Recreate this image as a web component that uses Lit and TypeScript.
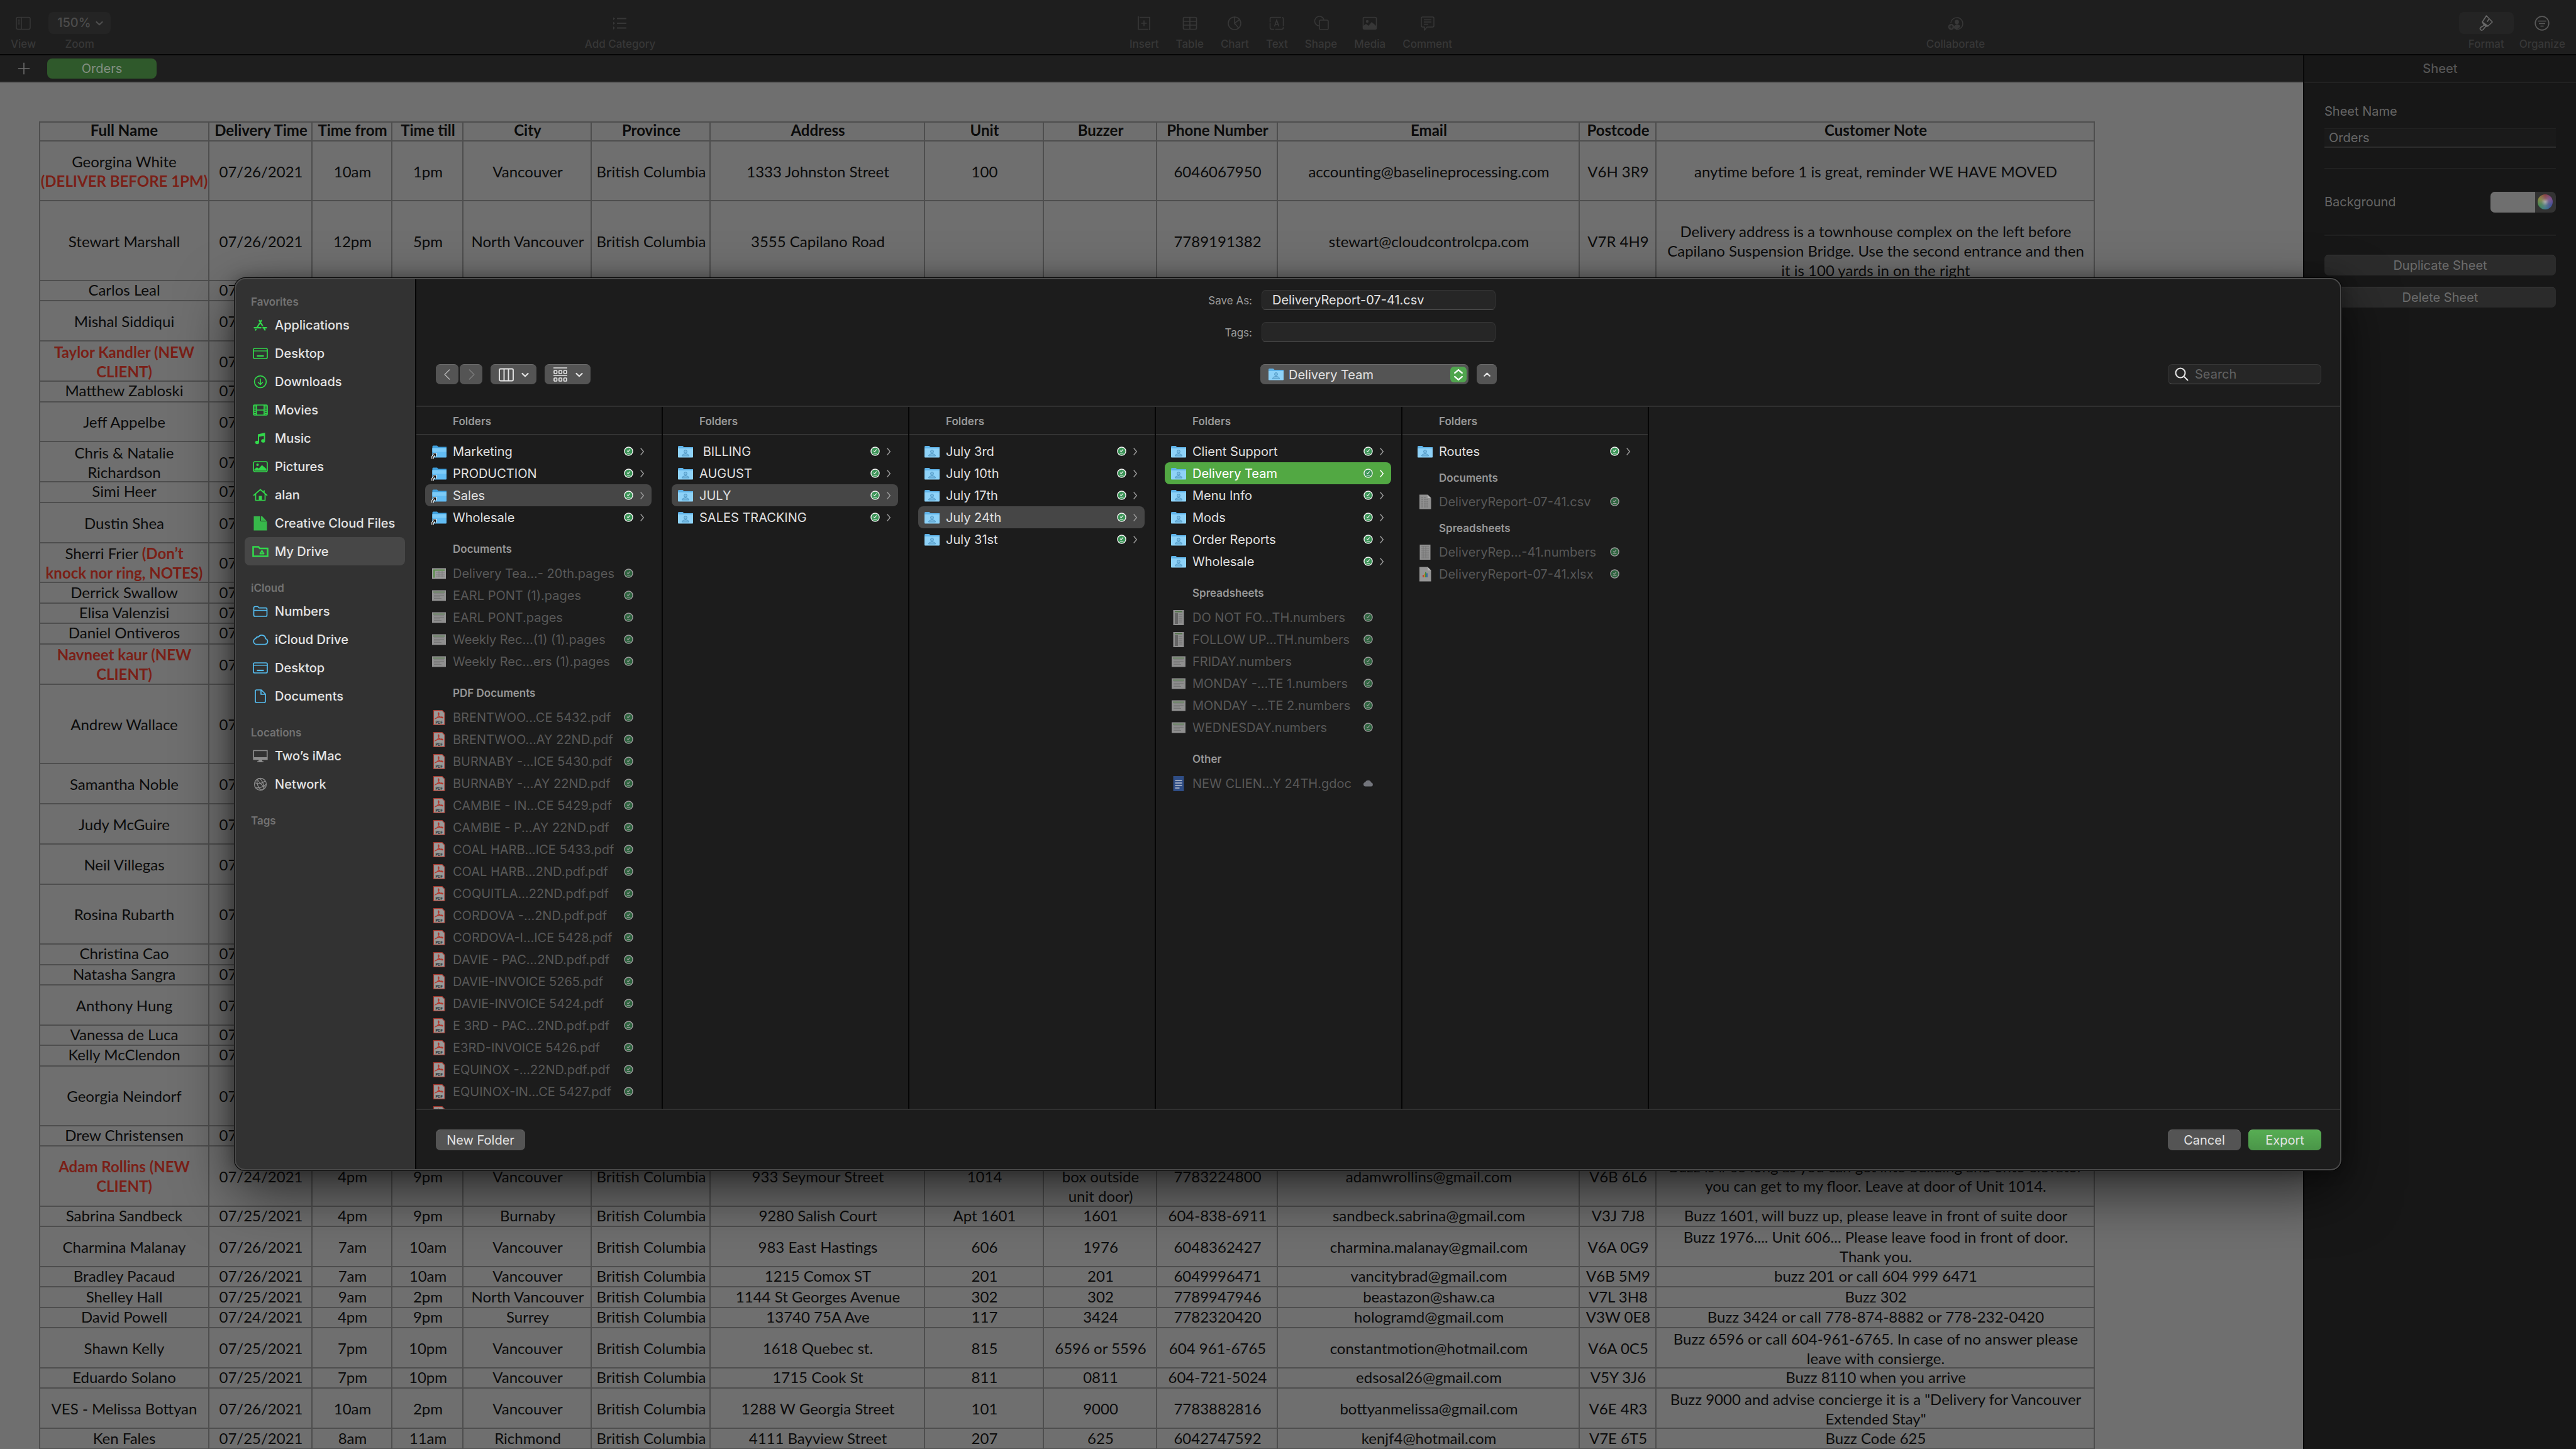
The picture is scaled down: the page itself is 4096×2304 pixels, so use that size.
import { LitElement, html, css, svg, TemplateResult } from "lit";
import { customElement, property } from "lit/decorators.js";
import { classMap } from "lit/directives/class-map.js";

/* ---------- data ---------- */

type Cell = string | TemplateResult;
interface Order {
  lines: 1 | 2 | 3 | 4;
  name: Cell;
  date: string;
  rest?: Cell[];
}

const red = (text: Cell) => html`<b class="alert">${text}</b>`;

const COLUMNS = [
  "Full Name", "Delivery Time", "Time from", "Time till", "City", "Province", "Address",
  "Unit", "Buzzer", "Phone Number", "Email", "Postcode", "Customer Note",
];

const BC = "British Columbia";

const ORDERS: Order[] = [
  { lines: 3, name: html`Georgina White<br />${red("(DELIVER BEFORE 1PM)")}`, date: "07/26/2021",
    rest: ["10am", "1pm", "Vancouver", BC, "1333 Johnston Street", "100", "", "6046067950", "accounting@baselineprocessing.com", "V6H 3R9", "anytime before 1 is great, reminder WE HAVE MOVED"] },
  { lines: 4, name: "Stewart Marshall", date: "07/26/2021",
    rest: ["12pm", "5pm", "North Vancouver", BC, "3555 Capilano Road", "", "", "7789191382", "stewart@cloudcontrolcpa.com", "V7R 4H9",
      html`<br />Delivery address is a townhouse complex on the left before<br />Capilano Suspension Bridge. Use the second entrance and then<br />it is 100 yards in on the right`] },
  { lines: 1, name: "Carlos Leal", date: "07/26/2021" },
  { lines: 2, name: "Mishal Siddiqui", date: "07/26/2021" },
  { lines: 2, name: red(html`Taylor Kandler (NEW<br />CLIENT)`), date: "07/26/2021" },
  { lines: 1, name: "Matthew Zabloski", date: "07/26/2021" },
  { lines: 2, name: "Jeff Appelbe", date: "07/26/2021" },
  { lines: 2, name: html`Chris &amp; Natalie<br />Richardson`, date: "07/26/2021" },
  { lines: 1, name: "Simi Heer", date: "07/26/2021" },
  { lines: 2, name: "Dustin Shea", date: "07/26/2021" },
  { lines: 2, name: html`Sherri Frier ${red(html`(Don’t<br />knock nor ring, NOTES)`)}`, date: "07/26/2021" },
  { lines: 1, name: "Derrick Swallow", date: "07/26/2021" },
  { lines: 1, name: "Elisa Valenzisi", date: "07/26/2021" },
  { lines: 1, name: "Daniel Ontiveros", date: "07/26/2021" },
  { lines: 2, name: red(html`Navneet kaur (NEW<br />CLIENT)`), date: "07/26/2021" },
  { lines: 4, name: "Andrew Wallace", date: "07/26/2021" },
  { lines: 2, name: "Samantha Noble", date: "07/26/2021" },
  { lines: 2, name: "Judy McGuire", date: "07/26/2021" },
  { lines: 2, name: "Neil Villegas", date: "07/26/2021" },
  { lines: 3, name: "Rosina Rubarth", date: "07/26/2021" },
  { lines: 1, name: "Christina Cao", date: "07/26/2021" },
  { lines: 1, name: "Natasha Sangra", date: "07/26/2021" },
  { lines: 2, name: "Anthony Hung", date: "07/26/2021" },
  { lines: 1, name: "Vanessa de Luca", date: "07/26/2021" },
  { lines: 1, name: "Kelly McClendon", date: "07/26/2021" },
  { lines: 3, name: "Georgia Neindorf", date: "07/26/2021" },
  { lines: 1, name: "Drew Christensen", date: "07/26/2021" },
  { lines: 3, name: red(html`Adam Rollins (NEW<br />CLIENT)`), date: "07/24/2021",
    rest: ["4pm", "9pm", "Vancouver", BC, "933 Seymour Street", "1014", html`(lock<br />box outside<br />unit door)`, "7783224800", "adamwrollins@gmail.com", "V6B 6L6",
      html`Buzz is # so long as you can get into building and onto elevator<br />you can get to my floor. Leave at door of Unit 1014.`] },
  { lines: 1, name: "Sabrina Sandbeck", date: "07/25/2021",
    rest: ["4pm", "9pm", "Burnaby", BC, "9280 Salish Court", "Apt 1601", "1601", "604-838-6911", "sandbeck.sabrina@gmail.com", "V3J 7J8", "Buzz 1601, will buzz up, please leave in front of suite door"] },
  { lines: 2, name: "Charmina Malanay", date: "07/26/2021",
    rest: ["7am", "10am", "Vancouver", BC, "983 East Hastings", "606", "1976", "6048362427", "charmina.malanay@gmail.com", "V6A 0G9", html`Buzz 1976.... Unit 606... Please leave food in front of door.<br />Thank you.`] },
  { lines: 1, name: "Bradley Pacaud", date: "07/26/2021",
    rest: ["7am", "10am", "Vancouver", BC, "1215 Comox ST", "201", "201", "6049996471", "vancitybrad@gmail.com", "V6B 5M9", "buzz 201 or call 604 999 6471"] },
  { lines: 1, name: "Shelley Hall", date: "07/25/2021",
    rest: ["9am", "2pm", "North Vancouver", BC, "1144 St Georges Avenue", "302", "302", "7789947946", "beastazon@shaw.ca", "V7L 3H8", "Buzz 302"] },
  { lines: 1, name: "David Powell", date: "07/24/2021",
    rest: ["4pm", "9pm", "Surrey", BC, "13740 75A Ave", "117", "3424", "7782320420", "hologramd@gmail.com", "V3W 0E8", "Buzz 3424 or call 778-874-8882 or 778-232-0420"] },
  { lines: 2, name: "Shawn Kelly", date: "07/25/2021",
    rest: ["7pm", "10pm", "Vancouver", BC, "1618 Quebec st.", "815", "6596 or 5596", "604 961-6765", "constantmotion@hotmail.com", "V6A 0C5", html`Buzz 6596 or call 604-961-6765. In case of no answer please<br />leave with consierge.`] },
  { lines: 1, name: "Eduardo Solano", date: "07/25/2021",
    rest: ["7pm", "10pm", "Vancouver", BC, "1715 Cook St", "811", "0811", "604-721-5024", "edsosal26@gmail.com", "V5Y 3J6", "Buzz 8110 when you arrive"] },
  { lines: 2, name: "VES - Melissa Bottyan", date: "07/26/2021",
    rest: ["10am", "2pm", "Vancouver", BC, "1288 W Georgia Street", "101", "9000", "7783882816", "bottyanmelissa@gmail.com", "V6E 4R3", html`Buzz 9000 and advise concierge it is a "Delivery for Vancouver<br />Extended Stay"`] },
  { lines: 1, name: "Ken Fales", date: "07/25/2021",
    rest: ["8am", "11am", "Richmond", BC, "4111 Bayview Street", "207", "625", "6042747592", "kenjf4@hotmail.com", "V7E 6T5", "Buzz Code 625"] },
];

interface Entry { name: string; icon: string; cloud?: boolean }
interface Section { title: string; items: Entry[]; dim?: boolean }
interface Pane { sections: Section[]; selected?: string; active?: boolean; compact?: boolean }

const entries = (icon: string, ...names: string[]): Entry[] => names.map((name) => ({ name, icon }));

const PANES: Pane[] = [
  { selected: "Sales", sections: [
    { title: "Folders", items: entries("alias", "Marketing", "PRODUCTION", "Sales", "Wholesale") },
    { title: "Documents", dim: true, items: [
      ...entries("pageside", "Delivery Tea...- 20th.pages"),
      ...entries("page", "EARL PONT (1).pages", "EARL PONT.pages", "Weekly Rec...(1) (1).pages", "Weekly Rec...ers (1).pages"),
    ] },
    { title: "PDF Documents", dim: true, items: [
      ...entries("pdf",
        "BRENTWOO...CE 5432.pdf", "BRENTWOO...AY 22ND.pdf", "BURNABY -...ICE 5430.pdf", "BURNABY -...AY 22ND.pdf",
        "CAMBIE - IN...CE 5429.pdf", "CAMBIE - P...AY 22ND.pdf", "COAL HARB...ICE 5433.pdf", "COAL HARB...2ND.pdf.pdf",
        "COQUITLA...22ND.pdf.pdf", "CORDOVA -...2ND.pdf.pdf", "CORDOVA-I...ICE 5428.pdf", "DAVIE - PAC...2ND.pdf.pdf",
        "DAVIE-INVOICE 5265.pdf", "DAVIE-INVOICE 5424.pdf", "E 3RD - PAC...2ND.pdf.pdf", "E3RD-INVOICE 5426.pdf",
        "EQUINOX -...22ND.pdf.pdf", "EQUINOX-IN...CE 5427.pdf"),
      ...entries("pdfsheet", ""),
    ] },
  ] },
  { selected: "JULY", sections: [{ title: "Folders", items: entries("folder", "\u00a0BILLING", "AUGUST", "JULY", "SALES TRACKING") }] },
  { selected: "July 24th", sections: [{ title: "Folders", items: entries("folder", "July 3rd", "July 10th", "July 17th", "July 24th", "July 31st") }] },
  { selected: "Delivery Team", active: true, sections: [
    { title: "Folders", items: entries("folder", "Client Support", "Delivery Team", "Menu Info", "Mods", "Order Reports", "Wholesale") },
    { title: "Spreadsheets", dim: true, items: [
      ...entries("tall", "DO NOT FO...TH.numbers", "FOLLOW UP...TH.numbers"),
      ...entries("page", "FRIDAY.numbers", "MONDAY -...TE 1.numbers", "MONDAY -...TE 2.numbers", "WEDNESDAY.numbers"),
    ] },
    { title: "Other", dim: true, items: [{ name: "NEW CLIEN...Y 24TH.gdoc", icon: "gdoc", cloud: true }] },
  ] },
  { compact: true, sections: [
    { title: "Folders", items: entries("folder", "Routes") },
    { title: "Documents", dim: true, items: entries("csv", "DeliveryReport-07-41.csv") },
    { title: "Spreadsheets", dim: true, items: [
      ...entries("grid", "DeliveryRep...-41.numbers"), ...entries("xlsx", "DeliveryReport-07-41.xlsx")] },
  ] },
];

const SIDEBAR = [
  { title: "Favorites", tint: "green", items: [
    ["apps", "Applications"], ["desktop", "Desktop"], ["downloads", "Downloads"], ["movies", "Movies"], ["music", "Music"],
    ["pictures", "Pictures"], ["home", "alan"], ["file", "Creative Cloud Files"], ["drive", "My Drive"]] },
  { title: "iCloud", tint: "blue", items: [["folderline", "Numbers"], ["cloud", "iCloud Drive"], ["desktop", "Desktop"], ["doc", "Documents"]] },
  { title: "Locations", tint: "gray", items: [["imac", "Two’s iMac"], ["globe", "Network"]] },
  { title: "Tags", tint: "gray", items: [] },
];

/* ---------- icons, all on a 24 unit square ---------- */

const sheetLines = svg`<path d="M4 9h16M4 11.5h16M4 14h10M4 16.5h12" stroke="#777" stroke-width="1"/>`;
const pdfSheet = svg`<path fill="#9b9a99" stroke="#a8382e" stroke-width="1.200" d="M3.500.6h13.500l4 4v18.800H3.500z"/><path fill="none" stroke="#b3372c" stroke-width="1.300" d="M6.500 13.500c3-.5 6-5 5.500-8.500-.8-2-2 0-1 2 1.200 3 4 5.500 6.800 5.500 1.200-.8-.5-1.800-3-1.500-3.500.3-7 1.300-8.300 2.500z"/>`;

const ICONS: Record<string, TemplateResult> = {
  apps: svg`<g fill="none" stroke="currentColor" stroke-width="2.2" stroke-linecap="round"><path d="M13.6 4.6 6.600 16M10.400 4.600l4.800 8M2.400 16.200h10.400M16.200 16.200h5.400M4.400 19.600l.5-.8M17 15.600l2.400 4"/></g>`,
  desktop: svg`<g fill="none" stroke="currentColor" stroke-width="1.700"><rect x="1" y="4" width="22" height="16" rx="2"/><path d="M1 8h22" stroke-width="1.300"/><path d="M6.500 16h11" stroke-width="2.200"/></g>`,
  downloads: svg`<g fill="none" stroke="currentColor" stroke-width="1.700" stroke-linecap="round" stroke-linejoin="round"><circle cx="12" cy="12" r="9.400"/><path d="M12 7.500v9M8.500 13l3.500 3.500 3.500-3.500"/></g>`,
  movies: svg`<g fill="none" stroke="currentColor" stroke-width="1.700"><rect x="1" y="4" width="22" height="16" rx="1.500"/><path d="M6 4v16M18 4v16M6 12h12"/><path d="M3.500 5v14M20.500 5v14" stroke-dasharray="1.500 1.500" stroke-width="3"/></g>`,
  music: svg`<path fill="currentColor" d="M8 5.500 19.500 3v13.200a3.200 2.700 0 1 1-2-2.600V8L10 9.600v9a3.200 2.700 0 1 1-2-2.600z"/>`,
  pictures: svg`<rect x="1" y="4" width="22" height="16" rx="2.500" fill="none" stroke="currentColor" stroke-width="1.700"/><circle cx="7.500" cy="9" r="2" fill="currentColor"/><path fill="currentColor" d="M2.500 18.500v-2.500l4-3 3 2 5-5.500 7 6v3z"/>`,
  home: svg`<g fill="none" stroke="currentColor" stroke-width="1.700" stroke-linejoin="round" stroke-linecap="round"><path d="M1.500 12.500 12 3.500l10.500 9M4.500 11v9.500h15V11M18 5v3"/></g><path fill="currentColor" d="M9.500 13.500h5v7h-5z"/>`,
  file: svg`<path fill="#37b84a" d="M1.500 1h13.500l7.500 8v14.500h-21z"/><path fill="none" stroke="#2b2f2c" d="M12.500 1v7.500h9.500"/>`,
  drive: svg`<path fill="none" stroke="currentColor" stroke-width="2.600" d="M0.500 5.500v14h23V7H11L9 4.500H.5z"/><path fill="none" stroke="currentColor" stroke-width="2" stroke-linejoin="round" d="M14.500 10.500l3 5h-6z"/>`,
  folderline: svg`<path fill="none" stroke="currentColor" stroke-width="1.700" stroke-linejoin="round" d="M1.500 6.500a2 2 0 0 1 2-2h4.500l2 2.200h10.500a2 2 0 0 1 2 2V18a2 2 0 0 1-2 2h-17a2 2 0 0 1-2-2zM1.500 10.500h21"/>`,
  cloud: svg`<path fill="none" stroke="currentColor" stroke-width="1.700" stroke-linejoin="round" d="M5.500 19.500a4.700 4.700 0 0 1-.8-9.200 4 4 0 0 1 4.500-2.600 6 6 0 0 1 11 2.800 4.600 4.600 0 0 1-.8 9z"/>`,
  doc: svg`<path fill="none" stroke="currentColor" stroke-width="1.700" stroke-linejoin="round" d="M6 2h7.500L20 8.500V20a2 2 0 0 1-2 2H6a2 2 0 0 1-2-2V4a2 2 0 0 1 2-2zM13 2v7h7"/>`,
  imac: svg`<path fill="none" stroke="currentColor" stroke-width="1.700" d="M1.200 3.500h21.600v14H1.200z"/><path fill="currentColor" d="M1 14h22v4H1zM9.500 18h5l.8 2.500H17V22H7v-1.500h1.700z"/>`,
  globe: svg`<g fill="none" stroke="currentColor" stroke-width="1.300"><circle cx="12" cy="12" r="9.500"/><ellipse cx="12" cy="12" rx="4.500" ry="9.500" transform="rotate(-20 12 12)"/><path d="M3 9.500c5 2.500 12 1.500 17-3M4 17.500c5 1 13-1 17.300-5.500M7 4c3 5 7 9.500 12.500 13"/></g>`,

  folder: svg`<path fill="#5fb3e8" d="M0 4.500A1.500 1.500 0 0 1 1.500 3h6l2 2H24v16H0z"/><path fill="#8ed2f8" d="M0 7h24v13.500a1 1 0 0 1-1 1H1a1 1 0 0 1-1-1z"/><circle cx="12" cy="12" r="2.400" fill="#7dbfe6" stroke="#4f97c4"/><path fill="#7dbfe6" stroke="#4f97c4" d="M6.500 19c0-4.500 11-4.500 11 0z"/>`,
  alias: svg`<path fill="#3f9fdc" d="M1.500 4A1.500 1.500 0 0 1 3 2.500h6l2 2H24V20H1.500z"/><path fill="#62bcf3" d="M1.500 6.500H24v14a1 1 0 0 1-1 1H1.500z"/><path fill="#7ccbf8" d="M1.500 6.500H24v6H1.500z"/><path d="M2 23.500V20l4-4M2.500 15.800h4v4" stroke="#fff" stroke-width="3.600" fill="none"/><path d="M2 23.500V20l4-4M2.500 15.800h4v4" stroke="#111" stroke-width="1.500" fill="none"/>`,
  page: svg`<path fill="#8f8f8f" d="M1 3.500h22v17H1z"/><path fill="#62815b" d="M3 5.500h18v1.800H3z"/>${sheetLines}`,
  pageside: svg`<path fill="#9c9c9c" d="M1 3.500h22v17H1z"/><path fill="#5c8f4d" d="M3 5.500h18v2H5.500v11H3z"/><path d="M7 10h14M7 13h14M7 16h14M12 8v10M17 8v10" stroke="#7d7d7d"/>`,
  tall: svg`<path fill="#8f8f8f" d="M3.500 0h17v24h-17z"/><path fill="#4d7044" d="M6 2h12v1.500H6z"/><path fill="#666" d="M6 5h5v17H6z"/><path stroke="#6f6f6f" d="M12 7h6M12 10h6M12 13h6M12 16h6M12 19h6"/>`,
  grid: svg`<path fill="#909090" d="M3.500 0h17v24h-17z"/><path stroke="#777" d="M6 3h12M6 6h12M6 9h12M6 12h12M6 15h12M6 18h12M6 21h12M9 2v20M13 2v20"/>`,
  pdf: svg`${pdfSheet}<text x="12.200" y="21.500" font-size="5.800" font-weight="700" text-anchor="middle" fill="#333" font-family="Inter, sans-serif">PDF</text>`,
  pdfsheet: pdfSheet,
  csv: svg`<path fill="#909090" d="M3 .5h13l5.500 5.500v17.500H3z"/><path fill="#b5b5b5" d="M16 .5V6h5.500z"/><path stroke="#6c6c6c" d="M6 4.500h8M6 8h12M6 11h12M6 14h12M6 17h12M6 20h12" stroke-dasharray="3 1"/>`,
  xlsx: svg`<path fill="#969696" d="M3 .5h13l5.500 5.500v17.500H3z"/><path fill="#b5b5b5" d="M16 .5V6h5.500z"/><path fill="#b4493c" d="M8 13h2v4H8z"/><path fill="#b98a2f" d="M10 11h2v6h-2z"/><path fill="#3f8a46" d="M12 8.500h2V17h-2z"/><path fill="#3d62a8" d="M14 10.500h2V17h-2z"/>`,
  gdoc: svg`<path fill="#2f4d85" d="M3.500 0H20.500v24H3.500z"/><path d="M6.500 7h11M6.500 11h11M6.500 15h11M6.500 19h7" stroke="#9aa6bd" stroke-width="1.800"/>`,

  synced: svg`<circle cx="12" cy="12" r="10.500" fill="#3b9457" stroke="#f2f2f2" stroke-width="2.200"/><path d="M8 10.500l2.800 2.600 5-5.600M7.500 16.800h9" fill="none" stroke="#f2f2f2" stroke-width="1.900"/>`,
  online: svg`<path fill="#aeb1bd" d="M5 20a5.500 5.500 0 0 1-.5-10.900 8 8 0 0 1 15 1A5 5 0 0 1 19.500 20z"/>`,
  next: svg`<path fill="none" stroke="currentColor" stroke-width="2.400" d="M8 2.500l8 9.500-8 9.500"/>`,
  prev: svg`<path fill="none" stroke="currentColor" stroke-width="1.800" stroke-linecap="round" stroke-linejoin="round" d="M16 2.500 6.500 12l9.500 9.500"/>`,
  forward: svg`<path fill="none" stroke="currentColor" stroke-width="1.800" stroke-linecap="round" stroke-linejoin="round" d="M8 2.500 17.500 12 8 21.500"/>`,
  down: svg`<path fill="none" stroke="currentColor" stroke-width="4.500" stroke-linecap="round" stroke-linejoin="round" d="M3 8l9 8.500L21 8"/>`,
  up: svg`<path fill="none" stroke="currentColor" stroke-width="4" stroke-linecap="round" stroke-linejoin="round" d="M4 16l8-7.500 8 7.500"/>`,
  updown: svg`<path fill="none" stroke="#fff" stroke-width="2.800" stroke-linecap="round" stroke-linejoin="round" d="M5 8.500 12 2.500l7 6M5 15.500l7 6 7-6"/>`,
  columns: svg`<g fill="none" stroke="currentColor" stroke-width="1.900"><rect x="1" y="2.500" width="22" height="19" rx="2"/><path d="M8.500 3v18M15.500 3v18"/></g>`,
  group: svg`<g fill="none" stroke="currentColor" stroke-width="1.700"><path d="M1 1h22M1 13h22"/><rect x="2" y="5" width="4.500" height="5" rx="1"/><rect x="9.800" y="5" width="4.500" height="5" rx="1"/><rect x="17.500" y="5" width="4.500" height="5" rx="1"/><rect x="2" y="17" width="4.500" height="5" rx="1"/><rect x="9.800" y="17" width="4.500" height="5" rx="1"/><rect x="17.500" y="17" width="4.500" height="5" rx="1"/></g>`,
  search: svg`<path fill="none" stroke="currentColor" stroke-width="2.100" stroke-linecap="round" d="M10 2.500a7.500 7.500 0 1 1 0 15 7.500 7.500 0 0 1 0-15zM15.500 15.500l6 6"/>`,
  plus: svg`<path stroke="currentColor" stroke-width="1.900" d="M12 1v22M1 12h22"/>`,

  view: svg`<g fill="none" stroke="currentColor" stroke-width="1.500"><rect x="1" y="2.500" width="22" height="19" rx="2.500"/><path d="M9 2.500v19M3.500 7h3M3.500 10h3M3.500 13h3"/></g>`,
  category: svg`<path stroke="currentColor" stroke-width="2.200" d="M7 4.500h15M7 12h15M7 19.500h15"/><path fill="currentColor" d="M1 2.500 4 4.500 1 7zM1 9.500 4 12l-3 2.500zM1 17l3 2.500-3 2.500z"/>`,
  insert: svg`<path fill="none" stroke="currentColor" stroke-width="1.600" d="M5 2.500h16v17M19 21.500H3V5M12 7.500v9M7.500 12h9M3 1v4M21 19v4"/>`,
  table: svg`<g fill="none" stroke="currentColor" stroke-width="1.700"><rect x="1.500" y="2.500" width="21" height="19" rx="2"/><path d="M1.500 9h21M1.500 15h21M12 2.500v19"/></g>`,
  chart: svg`<path fill="none" stroke="currentColor" stroke-width="1.600" d="M12 2a10 10 0 1 0 0 20 10 10 0 0 0 0-20v10l8-6M12 12l6.500 7.500"/>`,
  text: svg`<rect x="1.500" y="2.500" width="21" height="19" rx="2.500" fill="none" stroke="currentColor" stroke-width="1.600" stroke-dasharray="15 1.500"/><path fill="none" stroke="currentColor" stroke-width="1.600" d="M8.500 17 12 7l3.500 10M9.700 14h4.600"/>`,
  shape: svg`<g fill="none" stroke="currentColor" stroke-width="1.600"><path d="M8 16a7.500 7.500 0 1 1 8-10"/><rect x="9" y="7" width="14" height="15" rx="2"/></g>`,
  media: svg`<rect x="1.500" y="2.500" width="21" height="19" rx="2" fill="none" stroke="currentColor" stroke-width="1.600"/><circle cx="8" cy="9" r="2.200" fill="currentColor"/><path fill="currentColor" d="M2 21v-5l4-3 4 3 5-6 7 6v5z"/>`,
  comment: svg`<path fill="none" stroke="currentColor" stroke-width="1.500" stroke-linejoin="round" d="M4 2h16a2 2 0 0 1 2 2v12a2 2 0 0 1-2 2h-9l-4 5v-5H4a2 2 0 0 1-2-2V4a2 2 0 0 1 2-2zM6 6.500h12M6 10h12M6 13.500h7"/>`,
  collaborate: svg`<path fill="none" stroke="currentColor" stroke-width="1.500" d="M5 12a9.500 9.500 0 1 1 8 9.800"/><circle cx="14.500" cy="10" r="3.400" fill="currentColor"/><path fill="currentColor" d="M9.500 18c1-5 9-5 10.500-1.500a9 9 0 0 1-9 5zM5.500 13a4.800 4.800 0 1 1 0 9.600 4.800 4.800 0 0 1 0-9.600z"/><path stroke="#1e1e1e" stroke-width="1.300" d="M5.500 15v5.600M2.700 17.800h5.600"/>`,
  format: svg`<g fill="none" stroke="currentColor" stroke-width="1.600" stroke-linejoin="round"><path d="M12.500 0 6 10l9 6.500 7-6.500zM6 10l2 3.500 4.500 3.500 2.500-.5M17 4.500l-3 5"/><path d="M9.500 15l-6 3.500a2.600 2.600 0 1 0 3.400 4l5-6"/></g>`,
  organize: svg`<g fill="none" stroke="currentColor" stroke-width="1.700"><circle cx="12" cy="12" r="10.800"/><path d="M5.500 8.500h13M7 12.500h10M9.500 16.500h5"/></g>`,
};

const icon = (name: string, cls = "") =>
  html`<svg class="icon ${cls}" viewBox="0 0 24 24" aria-hidden="true">${ICONS[name]}</svg>`;

const base = css`
  * { box-sizing: border-box; }
  button, input, select { font: inherit; color: inherit; margin: 0; border: 0; background: none; padding: 0; outline: none; }
  button { display: flex; align-items: center; justify-content: center; }
  .icon { width: 24px; height: 24px; flex: none; display: block; overflow: visible; }
`;

/* ---------- toolbar ---------- */

@customElement("app-toolbar")
export class AppToolbar extends LitElement {
  static styles = [base, css`
    :host { display: flex; justify-content: space-between; padding: 19px 17px 0; height: 88px; background: #1e1e1e; border-bottom: 2px solid #050505; color: #373737; font-size: 17px; line-height: 21px; font-weight: 500; }
    .group { display: flex; gap: 27px; }
    .item { display: flex; flex-direction: column; align-items: center; justify-content: flex-start; gap: 6px; }
    .face { height: 35px; display: flex; align-items: center; justify-content: center; border-radius: 8px; }
    .pill { background: #242424; }
    .zoom { width: 99px; position: relative; }
    .zoom select { appearance: none; width: 100%; height: 100%; padding: 0 14px; font-size: 20px; color: #4c4c4c; }
    .zoom .icon { position: absolute; right: 12px; top: 12px; width: 12px; height: 12px; pointer-events: none; color: #4f4f4f; }
    .format { width: 87px; color: #696969; }
    .bright { color: #585858; }
    .left { gap: 20px; }
    .right { gap: 9px; }
  `];

  private item(name: string, label: string, face = "") {
    return html`<button class="item"><span class="face ${face}">${icon(name)}</span>${label}</button>`;
  }

  render() {
    return html`
      <div class="group left">
        ${this.item("view", "View")}
        <label class="item"><span class="face pill zoom"><select><option>150%</option></select>${icon("down")}</span>Zoom</label>
      </div>
      <div class="group">${this.item("category", "Add Category")}</div>
      <div class="group">
        ${this.item("insert", "Insert")}${this.item("table", "Table")}${this.item("chart", "Chart")}${this.item("text", "Text")}
        ${this.item("shape", "Shape")}${this.item("media", "Media")}${this.item("comment", "Comment")}
      </div>
      <div class="group">${this.item("collaborate", "Collaborate")}</div>
      <div class="group right">${this.item("format", "Format", "pill format")}${this.item("organize", "Organize", "bright")}</div>
    `;
  }
}

/* ---------- order table ---------- */

@customElement("order-table")
export class OrderTable extends LitElement {
  static styles = [base, css`
    :host { display: block; flex: 1; min-height: 0; overflow: hidden; background: #6f6f6f; padding: 62px 0 0 62px; }
    table { border-spacing: 0; table-layout: fixed; width: 3269px; height: 2112px; color: #0b0b0b; font-family: Lato, "Open Sans", sans-serif; font-size: 24px; line-height: 31px; text-align: center; }
    th, td { padding: 0 0 1px; vertical-align: middle; white-space: nowrap; overflow: hidden; box-shadow: inset -2px -2px #4e4e4e; }
    th:first-child, td:first-child { box-shadow: inset -2px -2px #4e4e4e, inset 2px 0 #4e4e4e; }
    thead th { box-shadow: inset -2px -2px #4e4e4e, inset 0 2px #4e4e4e; font-weight: 700; }
    thead th:first-child { box-shadow: inset -2px -2px #4e4e4e, inset 2px 2px #4e4e4e; }
    .l1 { height: 32px; line-height: 28px; }
    .l1 > * { padding-bottom: 4px; }
    .l2 { height: 63px; }
    .l3 { height: 94px; }
    .l4 { height: 125px; }
    .alert { color: #7a1f17; font-weight: 700; }
    .c0 { width: 271px; } .c1 { width: 164px; } .c2 { width: 127px; } .c3 { width: 113px; } .c4 { width: 204px; }
    .c5 { width: 189px; } .c6 { width: 341px; } .c7 { width: 189px; } .c8 { width: 180px; } .c9 { width: 192px; }
    .c10 { width: 480px; } .c11 { width: 122px; } .c12 { width: 697px; }
  `];

  render() {
    const blank = Array<Cell>(11).fill("");
    return html`
      <table>
        <colgroup>${COLUMNS.map((_, i) => html`<col class="c${i}" />`)}</colgroup>
        <thead><tr class="l1">${COLUMNS.map((c) => html`<th scope="col">${c}</th>`)}</tr></thead>
        <tbody>
          ${ORDERS.map((o) => html`<tr class="l${o.lines}">
            <td>${o.name}</td><td>${o.date}</td>${(o.rest ?? blank).map((c) => html`<td>${c}</td>`)}
          </tr>`)}
        </tbody>
      </table>
    `;
  }
}

/* ---------- inspector ---------- */

@customElement("sheet-inspector")
export class SheetInspector extends LitElement {
  static styles = [base, css`
    :host { display: flex; flex-direction: column; width: 434px; flex: none; background: #171717; border-left: 2px solid #080808; color: #666; font-size: 20px; line-height: 24px; }
    h2 { margin: 0; height: 44px; padding-top: 9px; border-bottom: 2px solid #222; font-size: 20px; font-weight: 500; text-align: center; color: #545454; }
    .body { display: flex; flex-direction: column; padding: 33px 32px 0 32px; }
    .name { display: flex; flex-direction: column; gap: 15px; }
    .name input { height: 31px; padding: 0 7px; background: #1a1a1a; border-top: 1px solid #222; border-bottom: 2px solid #2c2c2c; width: 100%; }
    hr { width: 100%; height: 2px; border: 0; margin: 0; background: #212121; }
    .first { margin-top: 32px; }
    .fill { display: flex; justify-content: space-between; align-items: center; height: 104px; }
    .well { width: 104px; height: 33px; border-radius: 7px; overflow: hidden; background: #333; justify-content: flex-start; }
    .color { width: 71px; height: 33px; background: #6f6f6f; }
    .wheel { width: 24px; height: 24px; margin-left: 4px; border-radius: 50%; background: radial-gradient(circle, #aaa 0, #8886 35%, transparent 75%), conic-gradient(#8a3a40, #7a4a90, #3a4a9a, #3a7a8a, #3f8a50, #8a8a3a, #8a3a40); }
    .actions { display: flex; flex-direction: column; gap: 18px; padding-top: 30px; }
    .actions button { height: 33px; border-radius: 7px; background: #2b2b2b; color: #6c6c6c; border-top: 1px solid #383838; }
  `];

  render() {
    return html`
      <h2>Sheet</h2>
      <div class="body">
        <label class="name">Sheet Name<input .value=${"Orders"} /></label>
        <hr class="first" />
        <div class="fill"><span>Background</span><button class="well" aria-label="Background"><span class="color"></span><span class="wheel"></span></button></div>
        <hr />
        <div class="actions"><button>Duplicate Sheet</button><button>Delete Sheet</button></div>
      </div>
    `;
  }
}

/* ---------- file browser column ---------- */

@customElement("file-pane")
export class FilePane extends LitElement {
  @property({ attribute: false }) pane!: Pane;

  static styles = [base, css`
    :host { display: flex; flex-direction: column; width: 392px; flex: none; border-right: 2px solid #050505; overflow: hidden; color: #e0e0e0; font-size: 20px; }
    h3 { margin: 0; padding-left: 58px; font-size: 17px; line-height: 24px; font-weight: 600; color: #979797; flex: none; }
    .head { height: 45px; padding-top: 11px; border-bottom: 2px solid #333; margin-bottom: 8px; }
    .sub { height: 54px; padding-top: 21px; }
    .compact .sub { height: 45px; padding-top: 13px; }
    .list { display: flex; flex-direction: column; }
    .row { height: 35px; flex: none; margin: 0 16px 0 14px; padding: 0 8px 0 10px; border-radius: 8px; justify-content: flex-start; text-align: left; }
    .name { flex: 1; padding-left: 10px; white-space: nowrap; }
    .status { width: 15px; height: 15px; }
    .more { width: 14px; height: 14px; margin-left: 7px; color: #9a9a9a; }
    .none { visibility: hidden; }
    .dim { color: #585858; }
    .dim .status { opacity: 0.6; }
    .selected { background: #464646; }
    .active { background: #52a843; color: #fff; }
    .active .more { color: #fff; }
  `];

  render() {
    const p = this.pane;
    return html`<div class=${classMap({ list: true, compact: !!p.compact })}>
      ${p.sections.map((s, i) => html`
        <h3 class=${i ? "sub" : "head"}>${s.title}</h3>
        ${s.items.map((e) => {
          const on = e.name === p.selected;
          return html`<button class=${classMap({ row: true, dim: !!s.dim, selected: on, active: on && !!p.active })}>
            ${icon(e.icon)}<span class="name">${e.name}</span>
            ${icon(e.cloud ? "online" : "synced", e.name ? "status" : "status none")}${icon("next", s.dim ? "more none" : "more")}
          </button>`;
        })}`)}
    </div>`;
  }
}

/* ---------- export dialog ---------- */

@customElement("export-dialog")
export class ExportDialog extends LitElement {
  static styles = [base, css`
    :host { display: flex; border-radius: 17px; overflow: hidden; background: #1c1c1c; color: #e4e4e4; font-size: 20px; line-height: 24px; height: 1419px;
      box-shadow: 0 0 0 1px #050505, 0 34px 90px rgba(0, 0, 0, 0.62), 0 0 24px rgba(0, 0, 0, 0.35); }
    :host::after { content: ""; position: absolute; inset: 0; border-radius: 17px; border: 2px solid #4b4b4b; pointer-events: none; }
    nav { width: 289px; flex: none; background: #323232; border-right: 2px solid #050505; padding: 26px 16px 0; }
    nav h3 { margin: 0; padding: 0 10px; height: 26px; font-size: 17px; line-height: 24px; font-weight: 600; color: #727272; }
    nav section { margin-bottom: 24px; }
    .place { width: 100%; height: 45px; padding: 0 13px; gap: 11px; border-radius: 8px; justify-content: flex-start; white-space: nowrap; font-weight: 500; }
    .here { background: #474747; }
    .green { color: #32d74b; }
    .blue { color: #55bdf0; }
    .gray { color: #8c8c8c; }
    .main { flex: 1; min-width: 0; display: flex; flex-direction: column; }
    .top { display: grid; grid-template-columns: 1fr 376px 1fr; row-gap: 19px; padding: 19px 32px 34px 31px; border-bottom: 2px solid #303030; align-items: center; }
    .top label { text-align: right; font-size: 17px; color: #9c9c9c; padding: 2px 13px 0 0; }
    .field { grid-column: 2; margin: 0 2px; width: 372px; height: 32px; padding: 0 16px; border-radius: 7px; background: #262626; border: 1px solid #363636; border-bottom-color: #555; }
    .tools { grid-column: 1 / 4; display: grid; grid-template-columns: 1fr 376px 1fr; align-items: center; margin-top: 16px; }
    .left { display: flex; gap: 13px; }
    .pair { display: flex; gap: 2px; }
    .ctl { height: 32px; border-radius: 7px; background: #545454; border-top: 1px solid #6a6a6a; }
    .pair .ctl { width: 36px; color: #b5b5b5; }
    .pair .off { color: #7c7c7c; }
    .pair .icon { width: 19px; height: 19px; }
    .menu { width: 73px; gap: 12px; }
    .menu .icon { width: 24px; height: 24px; }
    .menu .caret { width: 12px; height: 12px; }
    .middle { display: flex; justify-content: space-between; }
    .popup { position: relative; width: 331px; }
    .popup select { appearance: none; width: 100%; height: 32px; padding: 0 45px; border-radius: 7px; background: #545454; border-top: 1px solid #6a6a6a; }
    .popup .lead { position: absolute; left: 13px; top: 4px; pointer-events: none; }
    .step { position: absolute; right: 3px; top: 4px; width: 26px; height: 25px; border-radius: 6px; background: #50a64e; display: grid; place-items: center; pointer-events: none; }
    .step .icon { width: 20px; height: 20px; }
    .fold { width: 32px; }
    .fold .icon { width: 13px; height: 13px; }
    .search { justify-self: end; width: 244px; height: 32px; display: flex; align-items: center; gap: 9px; padding: 0 9px; border-radius: 7px; background: #262626; border: 1px solid #363636; border-bottom-color: #555; }
    .search input { width: 100%; min-width: 0; }
    .search input::placeholder { color: #636363; opacity: 1; }
    .panes { flex: 1; min-height: 0; display: flex; }
    .foot { display: flex; gap: 12px; padding: 31px 32px 32px 31px; border-top: 2px solid #303030; }
    .btn { width: 116px; height: 33px; border-radius: 7px; background: #545454; border-top: 1px solid #6d6d6d; }
    .wide { width: 142px; margin-right: auto; }
    .primary { background: linear-gradient(#57ad53, #4a9548); border-top-color: #71bd6c; }
  `];

  render() {
    return html`
      <nav>
        ${SIDEBAR.map((g) => html`<section><h3>${g.title}</h3>
          ${g.items.map(([glyph, label]) => html`<button class=${classMap({ place: true, here: label === "My Drive" })}>
            ${icon(glyph, g.tint)}<span>${label}</span></button>`)}
        </section>`)}
      </nav>
      <div class="main">
        <div class="top">
          <label for="save">Save As:</label><input class="field" id="save" .value=${"DeliveryReport-07-41.csv"} /><span></span>
          <label for="tags">Tags:</label><input class="field" id="tags" />
          <div class="tools">
            <div class="left">
              <div class="pair"><button class="ctl" aria-label="Back">${icon("prev")}</button><button class="ctl off" aria-label="Forward">${icon("forward")}</button></div>
              <button class="ctl menu" aria-label="View">${icon("columns")}${icon("down", "caret")}</button>
              <button class="ctl menu" aria-label="Group">${icon("group")}${icon("down", "caret")}</button>
            </div>
            <div class="middle">
              <div class="popup"><select aria-label="Location"><option>Delivery Team</option></select>${icon("folder", "lead")}<span class="step">${icon("updown")}</span></div>
              <button class="ctl fold" aria-label="Collapse">${icon("up")}</button>
            </div>
            <div class="search">${icon("search")}<input type="text" aria-label="Search" placeholder="Search" /></div>
          </div>
        </div>
        <div class="panes">${PANES.map((p) => html`<file-pane .pane=${p}></file-pane>`)}</div>
        <div class="foot"><button class="btn wide">New Folder</button><button class="btn">Cancel</button><button class="btn primary">Export</button></div>
      </div>
    `;
  }
}

/* ---------- page ---------- */

@customElement("app-root")
export class AppRoot extends LitElement {
  static styles = [base, css`
    :host { display: flex; flex-direction: column; position: relative; height: 100vh; overflow: hidden; background: #1e1e1e; font-family: Inter, "Liberation Sans", sans-serif; }
    .work { flex: 1; min-height: 0; display: flex; }
    .sheet { flex: 1; min-width: 0; display: flex; flex-direction: column; }
    .tabs { display: flex; align-items: center; height: 43px; flex: none; padding: 0 26px; gap: 26px; background: #1e1e1e; border-bottom: 2px solid #262626; color: #6d6d6d; }
    .add { width: 23px; height: 32px; }
    .add .icon { width: 20px; height: 20px; }
    .tab { width: 174px; height: 32px; border-radius: 8px; background: #2f592b; color: #838f82; font-size: 20px; }
    export-dialog { position: absolute; top: 442px; left: 373px; right: 373px; }
  `];

  render() {
    return html`
      <app-toolbar></app-toolbar>
      <div class="work">
        <div class="sheet">
          <div class="tabs"><button class="add" aria-label="Add sheet">${icon("plus")}</button><button class="tab">Orders</button></div>
          <order-table></order-table>
        </div>
        <sheet-inspector></sheet-inspector>
      </div>
      <export-dialog></export-dialog>
    `;
  }
}
